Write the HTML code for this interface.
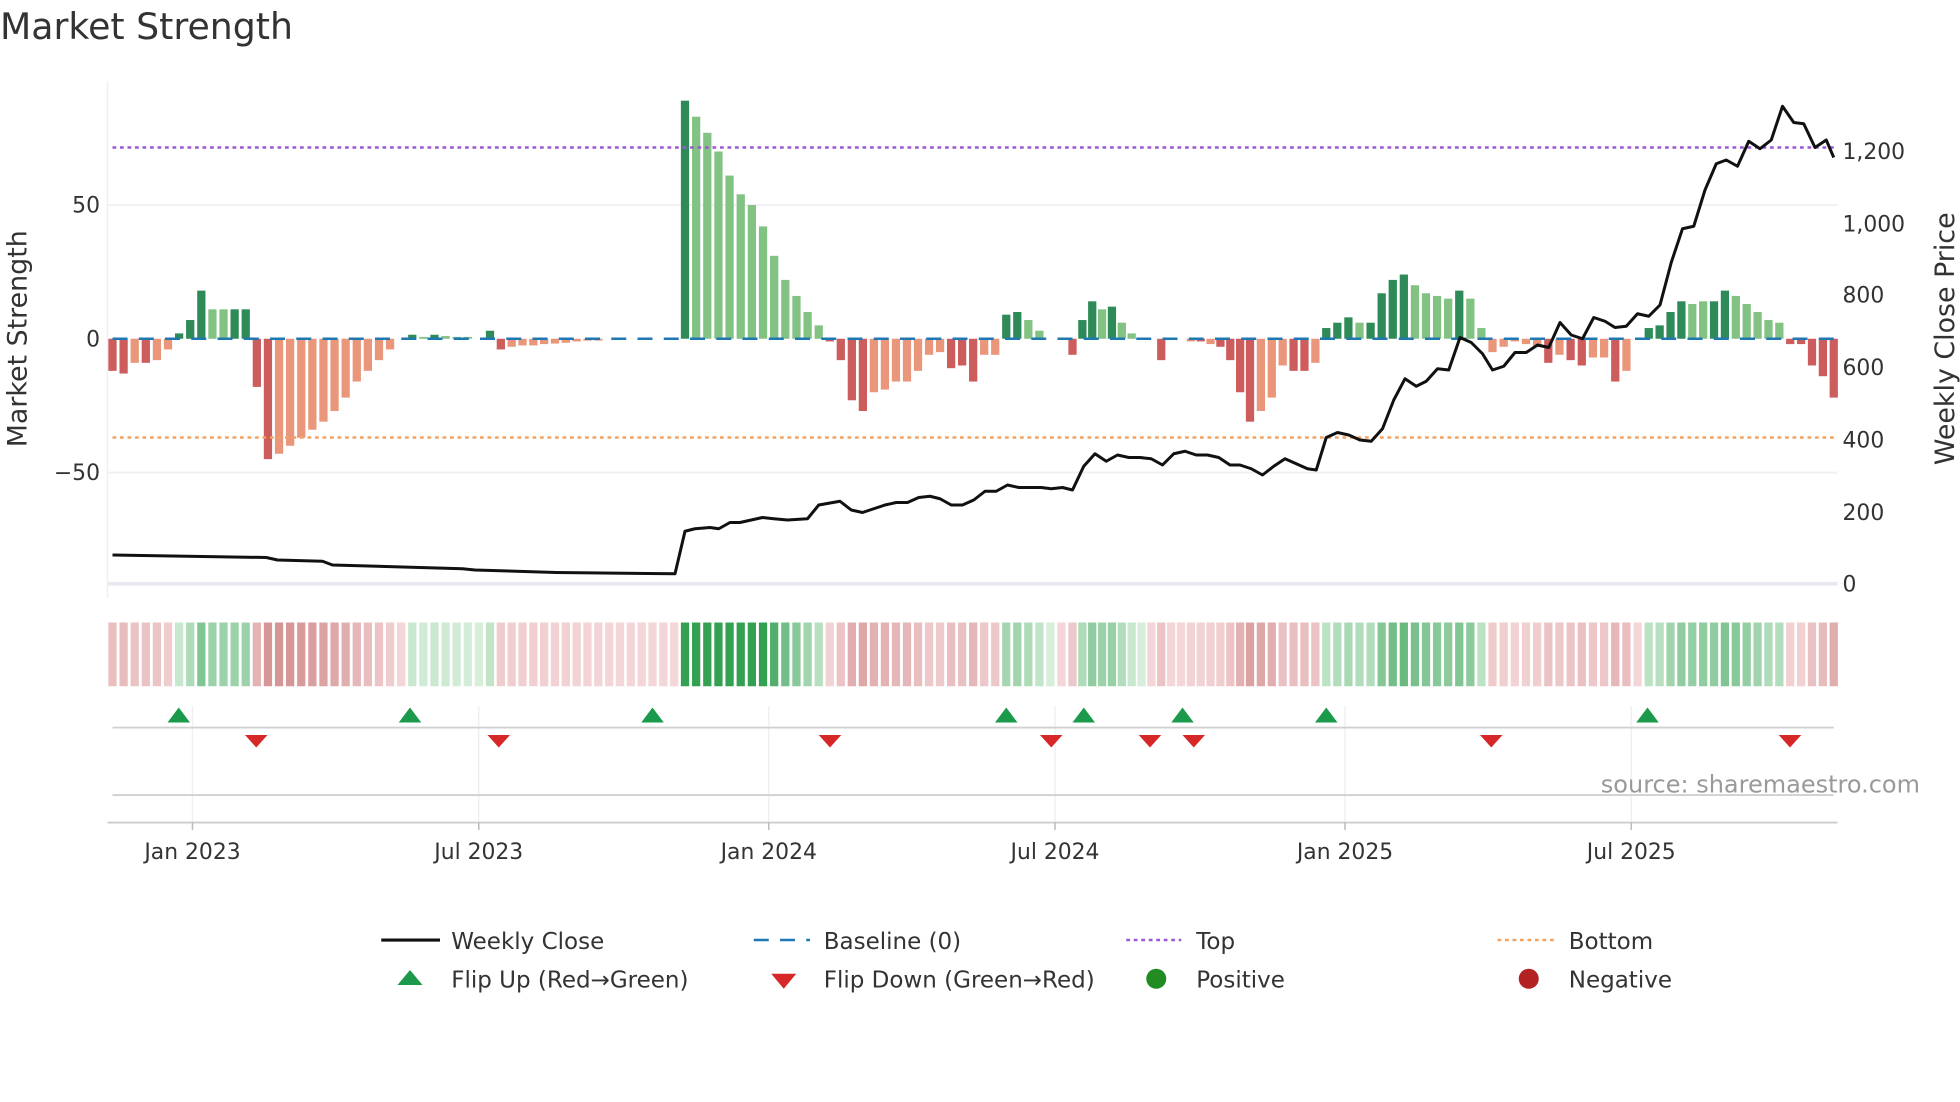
<!DOCTYPE html>
<html><head><meta charset="utf-8"><style>
html,body{margin:0;padding:0;background:#fff;}
svg{display:block;font-family:"DejaVu Sans","Liberation Sans",sans-serif;}
</style></head><body>
<svg id="s" width="1960" height="1102" viewBox="0 0 1568 881.6" xmlns="http://www.w3.org/2000/svg">
<rect width="1568" height="882" fill="#fff"/>
<text x="0" y="31" font-size="29" fill="#333">Market Strength</text>
<g id="grid">
<line x1="86" y1="164" x2="1470" y2="164" stroke="#eef0f3" stroke-width="1.5"/>
<line x1="86" y1="378" x2="1470" y2="378" stroke="#eef0f3" stroke-width="1.5"/>
<line x1="86" y1="65" x2="86" y2="478" stroke="#eef0f3" stroke-width="1.2"/>
<line x1="86" y1="467" x2="1470" y2="467" stroke="#e6e9f0" stroke-width="3"/>
</g>
<g id="bars"></g>
<line x1="90" y1="271" x2="1470" y2="271" stroke="#1f77b4" stroke-width="2" stroke-dasharray="12,9"/>
<line x1="90" y1="118" x2="1470" y2="118" stroke="#9b59d6" stroke-width="2" stroke-dasharray="3,3"/>
<line x1="90" y1="350" x2="1470" y2="350" stroke="#f4a261" stroke-width="2" stroke-dasharray="3,3"/>
<polyline id="price" fill="none" stroke="#111" stroke-width="2.4" stroke-linejoin="round"/>
<g font-size="17.5" fill="#333">
<text x="80" y="170" text-anchor="end">50</text>
<text x="80" y="277" text-anchor="end">0</text>
<text x="80" y="384" text-anchor="end">−50</text>
<text x="1474" y="127">1,200</text>
<text x="1474" y="185">1,000</text>
<text x="1474" y="242">800</text>
<text x="1474" y="300">600</text>
<text x="1474" y="358">400</text>
<text x="1474" y="416">200</text>
<text x="1474" y="473">0</text>
</g>
<text transform="translate(21,271) rotate(-90)" text-anchor="middle" font-size="21.5" fill="#333">Market Strength</text>
<text transform="translate(1563,271) rotate(-90)" text-anchor="middle" font-size="21.5" fill="#333">Weekly Close Price</text>
<g id="heat"></g>
<g stroke="#eef0f3" stroke-width="1.2">
<line x1="154" y1="565" x2="154" y2="658"/><line x1="383" y1="565" x2="383" y2="658"/>
<line x1="615" y1="565" x2="615" y2="658"/><line x1="844" y1="565" x2="844" y2="658"/>
<line x1="1076" y1="565" x2="1076" y2="658"/><line x1="1305" y1="565" x2="1305" y2="658"/>
</g>
<line x1="90" y1="582" x2="1467" y2="582" stroke="#d0d0d0" stroke-width="1.5"/>
<line x1="90" y1="636" x2="1467" y2="636" stroke="#d0d0d0" stroke-width="1.5"/>
<line x1="86" y1="658" x2="1470" y2="658" stroke="#ccc" stroke-width="1.5"/>
<g stroke="#bbb" stroke-width="1.2">
<line x1="154" y1="658" x2="154" y2="664"/><line x1="383" y1="658" x2="383" y2="664"/>
<line x1="615" y1="658" x2="615" y2="664"/><line x1="844" y1="658" x2="844" y2="664"/>
<line x1="1076" y1="658" x2="1076" y2="664"/><line x1="1305" y1="658" x2="1305" y2="664"/>
</g>
<g id="flips"></g>
<text x="1536" y="634" text-anchor="end" font-size="19.2" fill="#999">source: sharemaestro.com</text>
<g font-size="17.5" fill="#333" text-anchor="middle">
<text x="154" y="687">Jan 2023</text><text x="383" y="687">Jul 2023</text>
<text x="615" y="687">Jan 2024</text><text x="844" y="687">Jul 2024</text>
<text x="1076" y="687">Jan 2025</text><text x="1305" y="687">Jul 2025</text>
</g>
<g font-size="18.4" fill="#333">
<line x1="305" y1="752" x2="352" y2="752" stroke="#111" stroke-width="2.5"/>
<text x="361" y="759">Weekly Close</text>
<line x1="603" y1="752" x2="648" y2="752" stroke="#1f77b4" stroke-width="2" stroke-dasharray="12,9"/>
<text x="659" y="759">Baseline (0)</text>
<line x1="901" y1="752" x2="945" y2="752" stroke="#9b59d6" stroke-width="2" stroke-dasharray="3,3"/>
<text x="957" y="759">Top</text>
<line x1="1198" y1="752" x2="1244" y2="752" stroke="#f4a261" stroke-width="2" stroke-dasharray="3,3"/>
<text x="1255" y="759">Bottom</text>
<polygon points="318,788 338,788 328,776" fill="#1a9a4a"/>
<text x="361" y="790">Flip Up (Red→Green)</text>
<polygon points="617,779 637,779 627,791" fill="#d62828"/>
<text x="659" y="790">Flip Down (Green→Red)</text>
<circle cx="925" cy="783" r="8" fill="#228b22"/>
<text x="957" y="790">Positive</text>
<circle cx="1223" cy="783" r="8" fill="#b22222"/>
<text x="1255" y="790">Negative</text>
</g>
</svg>
<script>
var NS="http://www.w3.org/2000/svg";
function el(t,a,p){var e=document.createElementNS(NS,t);for(var k in a)e.setAttribute(k,a[k]);document.getElementById(p).appendChild(e);return e;}
var V=[[-12,1],[-13,1],[-9,0],[-9,1],[-8,0],[-4,0],[2,1],[7,1],[18,1],[11,0],[11,0],[11,1],[11,1],
[-18,1],[-45,1],[-43,0],[-40,0],[-37,0],[-34,0],[-31,0],[-27,0],[-22,0],[-16,0],[-12,0],[-8,0],[-4,0],
[0,0],[1.5,1],[0.6,0],[1.5,1],[1,0],[0.5,0],[0.3,0],[0,0],[3,1],
[-4,1],[-3,0],[-2.5,0],[-2.5,0],[-2,0],[-1.8,0],[-1.5,0],[-1,0],[-0.7,0],[-0.4,0],[0,0],[0,0],[0,0],[0,0],[0,0],[0,0],[0,0],
[89,1],[83,0],[77,0],[70,0],[61,0],[54,0],[50,0],[42,0],[31,0],[22,0],[16,0],[10,0],[5,0],
[-1,1],[-8,1],[-23,1],[-27,1],[-20,0],[-19,0],[-16,0],[-16,0],[-12,0],[-6,0],[-5,0],[-11,1],[-10,1],[-16,1],[-6,0],[-6,0],
[9,1],[10,1],[7,0],[3,0],[0,0],[0,0],[-6,1],[7,1],[14,1],[11,0],[12,1],[6,0],[2,0],[0,0],[0,0],
[-8,1],[0,0],[0,0],[-1,0],[-1,1],[-2,0],[-3,1],[-8,1],[-20,1],[-31,1],[-27,0],[-22,0],[-10,0],[-12,1],[-12,1],[-9,0],
[4,1],[6,1],[8,1],[6,0],[6,1],[17,1],[22,1],[24,1],[20,0],[17,0],[16,0],[15,0],[18,1],[15,0],[4,0],
[-5,0],[-3,0],[-1,0],[-2,0],[-3,0],[-9,1],[-6,0],[-8,1],[-10,1],[-7,0],[-7,0],[-16,1],[-12,0],[0,0],
[4,1],[5,1],[10,1],[14,1],[13,0],[14,0],[14,1],[18,1],[16,0],[13,0],[10,0],[7,0],[6,0],[-2,1],[-2,1],[-10,1],[-14,1],[-22,1]];
var N=V.length,bw=6.6,u=2.14;
var A=[[0,90],[34,392],[52,548],[64,655],[81,805],[87,858],[96,929],[105,1000],[112,1061],[127,1194],[141,1319],[N-1,1467]];
function X(i){for(var k=0;k<A.length-1;k++){if(i<=A[k+1][0]){var a=A[k],b=A[k+1];return a[1]+(b[1]-a[1])*(i-a[0])/(b[0]-a[0]);}}return A[A.length-1][1];}
function mix(a,b,t){var r=[];for(var i=0;i<3;i++)r.push(Math.round(a[i]+(b[i]-a[i])*t));return "rgb("+r+")";}
for(var i=0;i<N;i++){
 var v=V[i][0],d=V[i][1],x=X(i)-bw/2;
 if(v!==0){var h=Math.max(Math.abs(v)*u,1.5);
  var c=v>0?(d?"#2e8b57":"#82c282"):(d?"#cd5c5c":"#e9967a");
  el("rect",{x:x,y:v>0?271-h:271,width:bw,height:h,fill:c},"bars");}
 var t=Math.min(Math.abs(v)/40,1),hc;
 if(v>0||(v==0&&V[Math.max(i-1,0)][0]>0)) hc=mix([214,238,218],[52,160,82],Math.pow(t,0.8));
 else hc=mix([244,214,216],[214,150,150],Math.pow(t,0.8));
 el("rect",{x:x,y:498,width:bw,height:51,fill:hc},"heat");
}
var P="90,444 213,446 222,448 258,449 266,452 370,455 380,456 445,458 540,459 548,425 556,423 568,422 575,423 584,418 592,418 601,416 610,414 619,415 630,416 646,415 655,404 672,401 681,408 690,410 699,407 708,404 717,402 726,402 735,398 744,397 752,399 761,404 770,404 779,400 788,393 797,393 806,388 815,390 824,390 833,390 841,391 850,390 858,392 867,373 876,363 885,369 894,364 903,366 912,366 921,367 930,372 939,363 948,361 957,364 966,364 975,366 984,372 992,372 1001,375 1010,380 1019,373 1028,367 1037,371 1046,375 1053,376 1061,350 1070,346 1079,348 1088,352 1097,353 1106,343 1115,320 1124,303 1133,309 1141,305 1150,295 1159,296 1168,270 1177,274 1186,283 1194,296 1203,293 1212,282 1221,282 1230,276 1239,278 1248,258 1257,268 1266,271 1275,254 1284,257 1292,262 1301,261 1310,251 1319,253 1328,244 1337,210 1346,183 1355,181 1364,152 1373,131 1381,128 1390,133 1399,113 1408,119 1417,112 1426,85 1435,98 1443,99 1452,118 1461,112 1467,126";
document.getElementById("price").setAttribute("points",P);
[143,328,522,805,867,946,1061,1318].forEach(function(x){el("polygon",{points:(x-9)+",578 "+(x+9)+",578 "+x+",566",fill:"#1a9a4a"},"flips");});
[205,399,664,841,920,955,1193,1432].forEach(function(x){el("polygon",{points:(x-9)+",588 "+(x+9)+",588 "+x+",598",fill:"#d62828"},"flips");});
</script>
</body></html>
